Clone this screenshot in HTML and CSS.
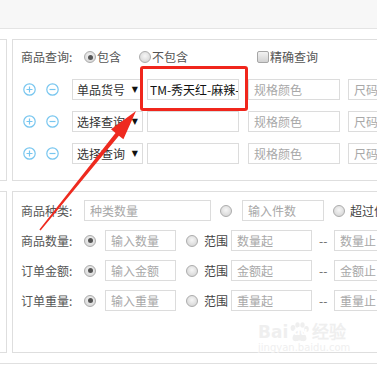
FILE: index.html
```html
<!DOCTYPE html>
<html lang="zh-CN">
<head>
    <meta charset="UTF-8">
    <meta name="viewport" content="width=device-width, initial-scale=1.0">
    <title>商品查询</title>
    <link rel="stylesheet" href="styles.css">
</head>
<body>

    <div class="topbar"></div>

    <!-- 商品查询 -->
    <div class="section">
        <div class="side"></div>
        <div class="panel panel-query">
            <div class="row row-head">
                <span class="label">商品查询:</span>
                <span class="radio on"></span><span class="opt">包含</span>
                <span class="radio r-second"></span><span class="opt">不包含</span>
                <span class="check"></span><span class="opt">精确查询</span>
            </div>

            <div class="row cond">
                <svg class="ico plus" width="13" height="13" viewBox="0 0 13 13"><circle cx="6.5" cy="6.5" r="5.7"/><path d="M3.5 6.5h6M6.5 3.5v6"/></svg>
                <svg class="ico minus" width="13" height="13" viewBox="0 0 13 13"><circle cx="6.5" cy="6.5" r="5.7"/><path d="M3.5 6.5h6"/></svg>
                <span class="select">单品货号<i>▼</i></span>
                <input class="box w-val" type="text" value="TM-秀天红-麻辣-">
                <input class="box w-spec" type="text" placeholder="规格颜色">
                <input class="box w-size" type="text" placeholder="尺码">
            </div>

            <div class="row cond">
                <svg class="ico plus" width="13" height="13" viewBox="0 0 13 13"><circle cx="6.5" cy="6.5" r="5.7"/><path d="M3.5 6.5h6M6.5 3.5v6"/></svg>
                <svg class="ico minus" width="13" height="13" viewBox="0 0 13 13"><circle cx="6.5" cy="6.5" r="5.7"/><path d="M3.5 6.5h6"/></svg>
                <span class="select">选择查询<i>▼</i></span>
                <input class="box w-val" type="text">
                <input class="box w-spec" type="text" placeholder="规格颜色">
                <input class="box w-size" type="text" placeholder="尺码">
            </div>

            <div class="row cond">
                <svg class="ico plus" width="13" height="13" viewBox="0 0 13 13"><circle cx="6.5" cy="6.5" r="5.7"/><path d="M3.5 6.5h6M6.5 3.5v6"/></svg>
                <svg class="ico minus" width="13" height="13" viewBox="0 0 13 13"><circle cx="6.5" cy="6.5" r="5.7"/><path d="M3.5 6.5h6"/></svg>
                <span class="select">选择查询<i>▼</i></span>
                <input class="box w-val" type="text">
                <input class="box w-spec" type="text" placeholder="规格颜色">
                <input class="box w-size" type="text" placeholder="尺码">
            </div>
        </div>
    </div>

    <!-- 数量 / 金额 / 重量 -->
    <div class="section">
        <div class="side"></div>
        <div class="panel panel-amount">
            <div class="row num">
                <span class="label">商品种类:</span>
                <input class="box w-kind" type="text" placeholder="种类数量">
                <span class="radio gap-r"></span>
                <input class="box w-piece" type="text" placeholder="输入件数">
                <span class="radio gap-r"></span><span class="opt over">超过件数</span>
            </div>
            <div class="row num">
                <span class="label">商品数量:</span>
                <span class="radio on"></span>
                <input class="box w-in" type="text" placeholder="输入数量">
                <span class="radio gap-range"></span><span class="opt range">范围</span>
                <input class="box w-from" type="text" placeholder="数量起">
                <span class="dash">--</span>
                <input class="box w-to" type="text" placeholder="数量止">
            </div>
            <div class="row num">
                <span class="label">订单金额:</span>
                <span class="radio on"></span>
                <input class="box w-in" type="text" placeholder="输入金额">
                <span class="radio gap-range"></span><span class="opt range">范围</span>
                <input class="box w-from" type="text" placeholder="金额起">
                <span class="dash">--</span>
                <input class="box w-to" type="text" placeholder="金额止">
            </div>
            <div class="row num">
                <span class="label">订单重量:</span>
                <span class="radio on"></span>
                <input class="box w-in" type="text" placeholder="输入重量">
                <span class="radio gap-range"></span><span class="opt range">范围</span>
                <input class="box w-from" type="text" placeholder="重量起">
                <span class="dash">--</span>
                <input class="box w-to" type="text" placeholder="重量止">
            </div>
        </div>
    </div>

    <div class="footline"></div>

    <!-- 标注 -->
    <div class="mark-box"></div>
    <svg class="mark-arrow" width="377" height="377" viewBox="0 0 377 377">
        <polygon points="136,111 123.4,139.3 118.9,135.7 40.6,230.6 39.4,229.6 115.5,132.9 111,129.3"/>
    </svg>

    <div class="watermark">
        <div class="wm-logo">Bai<svg width="22" height="20" viewBox="0 0 22 20"><ellipse cx="5" cy="6" rx="2.4" ry="3"/><ellipse cx="9.5" cy="3" rx="2.2" ry="2.8"/><ellipse cx="14.5" cy="3" rx="2.2" ry="2.8"/><ellipse cx="18.5" cy="7" rx="2.3" ry="3"/><path d="M11.5 8.5c-4 0-7 5-7 8 0 2 2 3 4 2.6 1.5-.3 2-.6 3-.6s1.5.3 3 .6c2 .4 4-.6 4-2.6 0-3-3-8-7-8z"/></svg><span class="wm-du">du</span>经验</div>
        <div class="wm-url">jingyan.baidu.com</div>
    </div>

</body>
</html>
```

FILE: styles.css
```css
body {
    margin: 0;
    width: 377px;
    height: 377px;
    overflow: hidden;
    position: relative;
    background: #fff;
    font-family: "Noto Sans CJK SC", "DejaVu Sans", sans-serif;
    font-size: 12px;
    color: #555;
}

.topbar {
    height: 28px;
    background: #f7f7f7;
    border-bottom: 1px solid #e4e4e4;
}

.section {
    display: flex;
    margin-top: 10px;
}

.side {
    flex: none;
    width: 6px;
    border: 1px solid #dedede;
    border-left: none;
}

.panel {
    flex: none;
    width: 420px;
    margin-left: 5px;
    box-sizing: border-box;
    border: 1px solid #dedede;
    border-right: none;
    padding-left: 8px;
}

.panel-query {
    height: 142px;
    padding-top: 7px;
}

.panel-amount {
    height: 162px;
    padding-top: 8px;
}

.footline {
    margin-top: 10px;
    border-top: 1px solid #e0e0e0;
}

.row {
    display: flex;
    align-items: center;
    white-space: nowrap;
}

.row-head {
    height: 20px;
}

.cond {
    height: 21px;
    margin-top: 11px;
}

.row-head + .cond {
    margin-top: 12px;
}

.num {
    height: 21px;
    margin-top: 9px;
}

.num:first-child {
    margin-top: 0;
}

.label {
    flex: none;
    width: 63px;
    line-height: 20px;
}

.opt {
    margin-left: 1px;
    line-height: 20px;
}

/* 单选框 / 复选框 */
.radio {
    flex: none;
    width: 12px;
    height: 12px;
    box-sizing: border-box;
    border: 1px solid #acacac;
    border-radius: 50%;
    background: radial-gradient(circle at 50% 40%, #f6f6f6, #cfcfcf);
    position: relative;
}

.radio.on::after {
    content: "";
    position: absolute;
    left: 2.5px;
    top: 2.5px;
    width: 5px;
    height: 5px;
    border-radius: 50%;
    background: #555;
}

.r-second {
    margin-left: 18px;
}

.check {
    flex: none;
    width: 12px;
    height: 12px;
    box-sizing: border-box;
    margin-left: 69px;
    border: 1px solid #a6a6a6;
    border-radius: 2px;
    background: linear-gradient(#f2f2f2, #d2d2d2);
}

/* 加减图标 */
.ico {
    flex: none;
    fill: none;
    stroke: #78c6ef;
    stroke-width: 1.2;
}

.plus {
    margin-left: 2px;
}

.minus {
    margin-left: 10px;
}

.select {
    flex: none;
    width: 71px;
    height: 21px;
    box-sizing: border-box;
    margin-left: 13px;
    padding-left: 4px;
    border: 1px solid #dcdcdc;
    color: #333;
    line-height: 19px;
    position: relative;
}

.select i {
    position: absolute;
    right: 4px;
    top: 0;
    font-family: "DejaVu Sans", sans-serif;
    font-style: normal;
    font-size: 8px;
    color: #111;
}

.box {
    flex: none;
    height: 21px;
    box-sizing: border-box;
    margin: 0;
    padding: 0 0 0 5px;
    border: 1px solid #dcdcdc;
    outline: none;
    font-family: "Noto Sans CJK SC", "DejaVu Sans", sans-serif;
    font-size: 12px;
    color: #111;
    background: #fff;
}

.box::placeholder {
    color: #a8a8a8;
}

.w-val {
    width: 92px;
    margin-left: 4px;
    padding-left: 2px;
}

.w-spec {
    width: 92px;
    margin-left: 9px;
}

.w-size {
    width: 92px;
    margin-left: 8px;
}

.w-kind {
    width: 127px;
}

.gap-r {
    margin-left: 9px;
}

.w-piece {
    width: 82px;
    margin-left: 10px;
}

.over {
    margin-left: 5px;
    color: #444;
}

.w-in {
    width: 71px;
    margin-left: 9px;
}

.gap-range {
    margin-left: 10px;
}

.range {
    margin-left: 6px;
    color: #444;
}

.w-from {
    width: 81px;
    margin-left: 3px;
}

.dash {
    margin-left: 7px;
    width: 8px;
    color: #666;
}

.w-to {
    width: 81px;
    margin-left: 7px;
}

/* 标注 */
.mark-box {
    position: absolute;
    left: 140px;
    top: 66px;
    width: 108px;
    height: 45px;
    box-sizing: border-box;
    border: 3px solid #f0261c;
    border-radius: 3px;
}

.mark-arrow {
    position: absolute;
    left: 0;
    top: 0;
    fill: #ee2a1f;
}

.watermark {
    position: absolute;
    left: 258px;
    top: 322px;
    color: #efefef;
    text-align: center;
}

.wm-logo {
    display: flex;
    align-items: center;
    font-family: "DejaVu Sans", sans-serif;
    font-size: 17px;
    font-weight: bold;
    line-height: 20px;
}

.wm-logo svg {
    fill: #efefef;
}

.wm-du {
    margin: 0 2px 0 -20px;
    font-size: 10px;
    color: #fff;
    width: 20px;
}

.wm-url {
    font-family: "DejaVu Sans", sans-serif;
    font-size: 10px;
    line-height: 12px;
}
```
